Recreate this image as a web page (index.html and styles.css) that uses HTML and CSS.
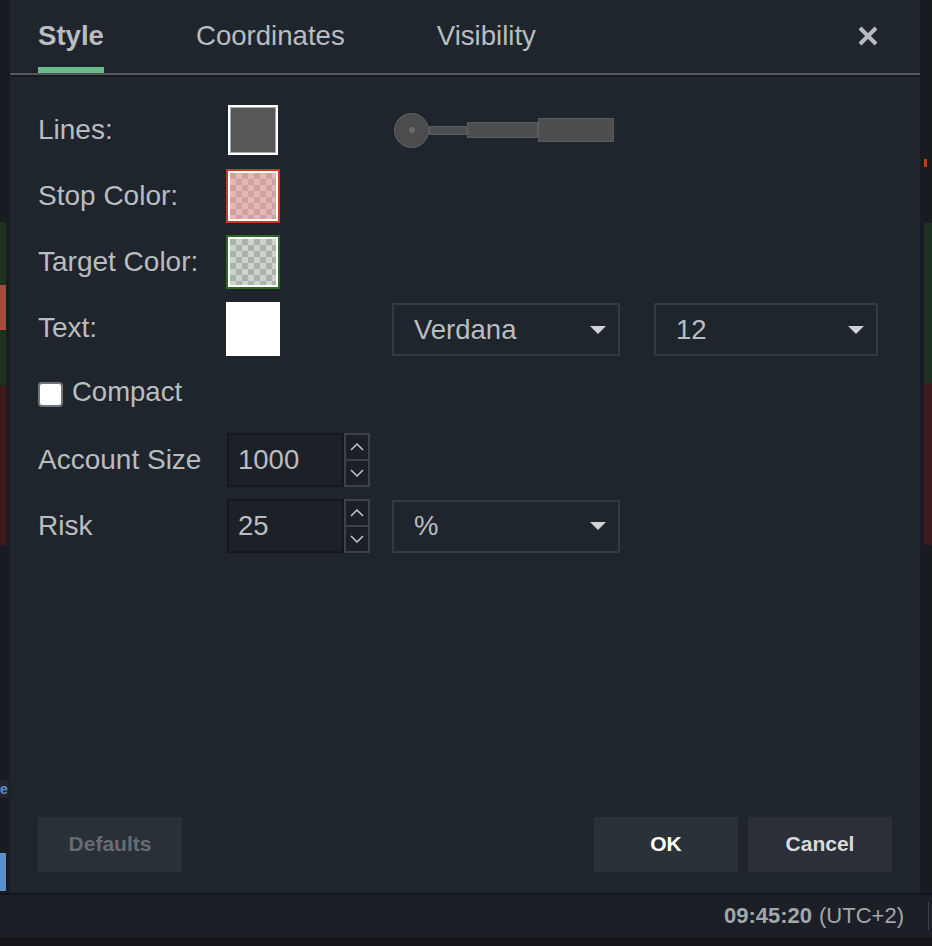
FILE: index.html
```html
<!DOCTYPE html>
<html lang="en">
<head>
    <meta charset="UTF-8">
    <title>Position Settings</title>
    <link rel="stylesheet" href="styles.css">
</head>
<body>
    <div class="app">
        <div class="main">
            <div class="chart-left">
                <div class="gap" style="height:222px"></div>
                <div class="blk green" style="height:63px"></div>
                <div class="blk salmon" style="height:45px"></div>
                <div class="blk green" style="height:55px"></div>
                <div class="blk darkred" style="height:160px"></div>
                <div class="gap" style="height:235px"></div>
                <div class="blue-e">e</div>
                <div class="gap" style="height:55px"></div>
                <div class="blk blue" style="height:38px"></div>
            </div>

            <div class="dialog">
                <div class="tabs">
                    <div class="tab active">Style</div>
                    <div class="tab">Coordinates</div>
                    <div class="tab">Visibility</div>
                    <div class="close">
                        <svg width="20" height="20" viewBox="0 0 20 20"><path d="M2 2L18 18M18 2L2 18" stroke="#b9bcbf" stroke-width="4"/></svg>
                    </div>
                </div>

                <div class="form">
                    <div class="row">
                        <div class="label">Lines:</div>
                        <div class="swatch"><div class="swatch-in grey"></div></div>
                        <div class="widths">
                            <div class="knob"><span></span></div>
                            <div class="bar thin"></div>
                            <div class="bar mid"></div>
                            <div class="bar thick"></div>
                        </div>
                    </div>
                    <div class="row">
                        <div class="label">Stop Color:</div>
                        <div class="swatch stop"><div class="swatch-in pink"></div></div>
                    </div>
                    <div class="row">
                        <div class="label">Target Color:</div>
                        <div class="swatch target"><div class="swatch-in sage"></div></div>
                    </div>
                    <div class="row text-row">
                        <div class="label">Text:</div>
                        <div class="swatch white"><div class="swatch-in"></div></div>
                        <div class="select font-select">Verdana<i class="caret"></i></div>
                        <div class="select size-select">12<i class="caret"></i></div>
                    </div>
                    <div class="row compact-row">
                        <div class="check"></div>
                        <div class="check-label">Compact</div>
                    </div>
                    <div class="row">
                        <div class="label">Account Size</div>
                        <div class="num">1000</div>
                        <div class="spin">
                            <div class="spin-btn"><svg width="14" height="8" viewBox="0 0 14 8"><path d="M1 7L7 1L13 7" stroke="#c4c7ca" stroke-width="1.5" fill="none"/></svg></div>
                            <div class="spin-btn"><svg width="14" height="8" viewBox="0 0 14 8"><path d="M1 1L7 7L13 1" stroke="#c4c7ca" stroke-width="1.5" fill="none"/></svg></div>
                        </div>
                    </div>
                    <div class="row">
                        <div class="label">Risk</div>
                        <div class="num">25</div>
                        <div class="spin">
                            <div class="spin-btn"><svg width="14" height="8" viewBox="0 0 14 8"><path d="M1 7L7 1L13 7" stroke="#c4c7ca" stroke-width="1.5" fill="none"/></svg></div>
                            <div class="spin-btn"><svg width="14" height="8" viewBox="0 0 14 8"><path d="M1 1L7 7L13 1" stroke="#c4c7ca" stroke-width="1.5" fill="none"/></svg></div>
                        </div>
                        <div class="select pct-select">%<i class="caret"></i></div>
                    </div>
                </div>

                <div class="footer">
                    <button class="btn defaults">Defaults</button>
                    <button class="btn ok">OK</button>
                    <button class="btn cancel">Cancel</button>
                </div>
            </div>

            <div class="chart-right">
                <div class="gap" style="height:159px"></div>
                <div class="candle"></div>
                <div class="gap" style="height:56px"></div>
                <div class="blk green" style="height:160px"></div>
                <div class="blk darkred" style="height:162px"></div>
            </div>
        </div>

        <div class="status">
            <span class="time">09:45:20</span>
            <span class="tz">(UTC+2)</span>
            <span class="sep"></span>
        </div>
        <div class="bottom"></div>
    </div>
</body>
</html>
```

FILE: styles.css
```css
body {
    margin: 0;
    background: #181b20;
    font-family: "Liberation Sans", Arial, sans-serif;
    color: #babdc0;
}
.app {
    width: 932px;
    height: 946px;
    display: flex;
    flex-direction: column;
    overflow: hidden;
}
.main {
    display: flex;
    height: 893px;
}

/* chart bits peeking out at the sides */
.chart-left {
    width: 10px;
    display: flex;
    flex-direction: column;
}
.chart-right {
    width: 8px;
    padding-left: 4px;
    display: flex;
    flex-direction: column;
}
.blk { width: 6px; }
.chart-right .blk { width: 8px; }
.green { background: #1e3121; }
.salmon { background: #a64a40; }
.darkred { background: #3e1a1d; }
.blue { background: #5b8fca; }
.blue-e {
    width: 9px;
    height: 18px;
    background: #23272d;
    color: #5b8fca;
    font-size: 14px;
    font-weight: bold;
    line-height: 18px;
}
.candle {
    width: 3px;
    height: 8px;
    background: #c0392b;
}

/* dialog */
.dialog {
    width: 910px;
    background: #1f252c;
    display: flex;
    flex-direction: column;
}
.tabs {
    display: flex;
    height: 73px;
    padding: 0 42px 0 28px;
    border-bottom: 2px solid #55595e;
    box-shadow: 0 2px 0 #171b20;
}
.tab {
    display: flex;
    align-items: center;
    padding-top: 5px;
    margin-right: 92px;
    font-size: 27.6px;
    border-bottom: 6px solid transparent;
}
.tab.active {
    font-weight: bold;
    border-bottom-color: #6cb98a;
}
.close {
    margin-left: auto;
    display: flex;
    align-items: center;
    padding-bottom: 1px;
}

.form {
    padding: 22px 0 0 28px;
    display: flex;
    flex-direction: column;
}
.row {
    display: flex;
    align-items: center;
    height: 66px;
}
.text-row .select { margin-top: 3px; }
.label {
    width: 188px;
    font-size: 28px;
}
.swatch {
    width: 54px;
    height: 54px;
    box-sizing: border-box;
    border: 2px solid transparent;
}
.swatch-in {
    height: 100%;
    box-sizing: border-box;
    border: 2px solid #fff;
}
.swatch.stop { border-color: #c33a25; }
.swatch.target { border-color: #2e6a20; }
.swatch.white { border-color: #fff; margin-top: 2px; }
.swatch.white .swatch-in { background: #fff; }
.grey {
    background: #575757;
    box-shadow: inset 0 0 0 1px #a9acae;
}
.pink {
    background: repeating-conic-gradient(#e5b8b8 0 25%, #d1a1a2 0 50%) 0 0 / 12px 12px;
}
.sage {
    background: repeating-conic-gradient(#ccd3cc 0 25%, #abb2ab 0 50%) 0 0 / 12px 12px;
}

.widths {
    display: flex;
    align-items: center;
    margin-left: 114px;
}
.knob {
    width: 33px;
    height: 33px;
    border: 1px solid #606264;
    border-radius: 50%;
    background: #4b4c4d;
    display: flex;
    align-items: center;
    justify-content: center;
}
.knob span {
    width: 6px;
    height: 6px;
    border-radius: 50%;
    background: #6a6b6c;
}
.bar {
    background: #4d4e4f;
    border: 1px solid #5b5c5d;
    box-sizing: border-box;
}
.bar.thin { width: 38px; height: 9px; }
.bar.mid { width: 71px; height: 16px; }
.bar.thick { width: 76px; height: 24px; }

.select {
    box-sizing: border-box;
    height: 53px;
    border: 2px solid #343a42;
    display: flex;
    align-items: center;
    padding-left: 20px;
    font-size: 27.5px;
}
.font-select { width: 228px; margin-left: 112px; }
.size-select { width: 224px; margin-left: 34px; }
.pct-select { width: 228px; margin-left: 22px; }
.caret {
    margin-left: auto;
    margin-right: 12px;
    width: 0;
    height: 0;
    border-left: 8px solid transparent;
    border-right: 8px solid transparent;
    border-top: 8px solid #d0d3d4;
}

.compact-row { padding-bottom: 4px; box-sizing: border-box; }
.check {
    width: 21px;
    height: 21px;
    background: #fff;
    border: 2px solid #70757a;
    border-radius: 4px;
    margin-top: 4px;
}
.check-label {
    margin-left: 9px;
    font-size: 27.5px;
}

.num {
    margin-left: 1px;
    width: 117px;
    height: 54px;
    box-sizing: border-box;
    background: #1c2127;
    border: 2px solid #14181c;
    display: flex;
    align-items: center;
    padding-left: 9px;
    font-size: 27.5px;
}
.spin {
    width: 26px;
    height: 54px;
    box-sizing: border-box;
    border: 2px solid #3c424a;
    display: flex;
    flex-direction: column;
}
.spin-btn {
    flex: 1;
    display: flex;
    align-items: center;
    justify-content: center;
    background: #1b2026;
}
.spin-btn + .spin-btn { border-top: 2px solid #3c424a; }

.footer {
    margin-top: auto;
    display: flex;
    gap: 10px;
    padding: 0 28px 21px 28px;
}
.btn {
    width: 144px;
    height: 55px;
    border: none;
    font-family: "Liberation Sans", Arial, sans-serif;
    font-size: 21px;
    font-weight: bold;
    padding-bottom: 3px;
    cursor: pointer;
}
.defaults {
    background: #2a3037;
    color: #686c71;
    margin-right: auto;
}
.ok {
    background: #2b3138;
    color: #ffffff;
}
.cancel {
    background: #2c2f38;
    color: #d9dbdd;
}

.status {
    height: 42px;
    border-top: 2px solid #121519;
    background: #1c2026;
    display: flex;
    align-items: center;
    justify-content: flex-end;
    font-size: 22px;
    color: #a3a6aa;
}
.time { font-weight: bold; }
.tz { margin-left: 7px; }
.sep {
    width: 1px;
    height: 28px;
    background: #3a3f45;
    margin: 0 3px 0 24px;
}
.bottom {
    flex: 1;
    background: #141619;
}
```
